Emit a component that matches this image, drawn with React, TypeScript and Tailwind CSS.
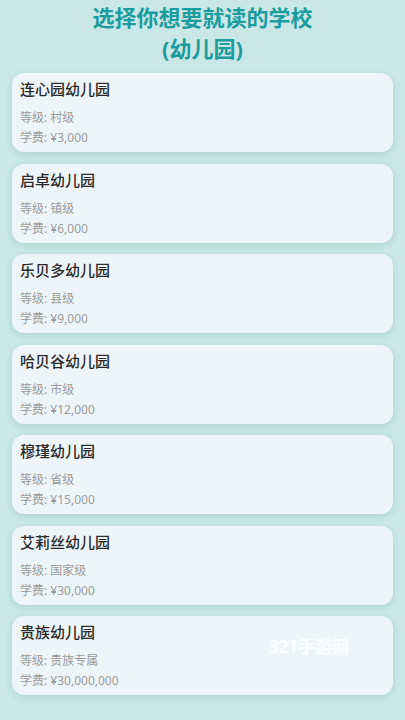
const schools = [
  { name: "连心园幼儿园", level: "村级", fee: "¥3,000" },
  { name: "启卓幼儿园", level: "镇级", fee: "¥6,000" },
  { name: "乐贝多幼儿园", level: "县级", fee: "¥9,000" },
  { name: "哈贝谷幼儿园", level: "市级", fee: "¥12,000" },
  { name: "穆瑾幼儿园", level: "省级", fee: "¥15,000" },
  { name: "艾莉丝幼儿园", level: "国家级", fee: "¥30,000" },
  { name: "贵族幼儿园", level: "贵族专属", fee: "¥30,000,000" },
];

function SchoolCard({ name, level, fee, mark }: { name: string; level: string; fee: string; mark?: boolean }) {
  return (
    <div className="relative h-[79px] rounded-xl bg-[#eef5f9] px-2 pt-[6px] shadow-[0_2px_6px_rgba(60,120,120,0.18)]">
      <div className="text-[15px] leading-5 font-medium text-[#2a2a2a]">{name}</div>
      <div className="mt-[9px] text-[12px] leading-5 text-[#9b9b9b]">等级: {level}</div>
      <div className="text-[12px] leading-5 text-[#9b9b9b]">学费: {fee}</div>
      {mark && (
        <div className="absolute left-[257px] top-[18px] text-[17px] font-semibold text-white/80">321手游网</div>
      )}
    </div>
  );
}

export default function App() {
  return (
    <div
      className="min-h-[720px] bg-[#c8e7e6] px-3 pb-6"
      style={{ fontFamily: '"Noto Sans", "Noto Sans CJK SC", sans-serif' }}
    >
      <h1 className="pt-[2px] text-center text-[22px] leading-[31px] font-bold text-[#1d9c9d]">
        选择你想要就读的学校
        <br />
        (幼儿园)
      </h1>
      <div className="mt-[9px] flex flex-col gap-[11.5px]">
        {schools.map((s, i) => (
          <SchoolCard key={s.name} {...s} mark={i === schools.length - 1} />
        ))}
      </div>
    </div>
  );
}
